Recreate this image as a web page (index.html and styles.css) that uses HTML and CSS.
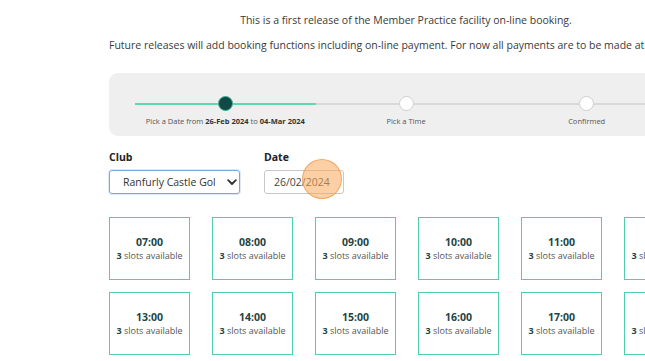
FILE: index.html
```html
<!DOCTYPE html>
<html lang="en">
<head>
  <meta charset="UTF-8" />
  <meta name="viewport" content="width=device-width, initial-scale=1" />
  <title>Member Practice Booking</title>
  <link rel="stylesheet" href="styles.css">
</head>
<body>
  <div class="page">
    <div class="intro">
      <p>This is a first release of the Member Practice facility on-line booking.</p>
      <p>Future releases will add booking functions including on-line payment. For now all payments are to be made at the Pro Shop.</p>
    </div>

    <div class="stepper">
      <div class="step done">
        <div class="track"><span class="bar"></span><span class="dot"></span><span class="bar"></span></div>
        <div class="step-label">Pick a Date from <b>26-Feb 2024</b> to <b>04-Mar 2024</b></div>
      </div>
      <div class="step">
        <div class="track"><span class="bar"></span><span class="dot"></span><span class="bar"></span></div>
        <div class="step-label">Pick a Time</div>
      </div>
      <div class="step">
        <div class="track"><span class="bar"></span><span class="dot"></span><span class="bar"></span></div>
        <div class="step-label">Confirmed</div>
      </div>
    </div>

    <div class="filters">
      <div class="field">
        <label>Club</label>
        <div class="select">
          <span class="select-text">Ranfurly Castle Golf Club</span>
          <svg class="chevron" width="10" height="7" viewBox="0 0 10 7"><path d="M1.2 1.2 L5 5 L8.8 1.2" fill="none" stroke="#333" stroke-width="1.9" stroke-linecap="round" stroke-linejoin="round"/></svg>
        </div>
      </div>
      <div class="field">
        <label>Date</label>
        <div class="date-input">
          26/02/2024
          <span class="click-mark"></span>
        </div>
      </div>
    </div>

    <div class="slots">
      <div class="slot"><div class="time">07:00</div><div class="avail"><b>3</b> slots available</div></div>
      <div class="slot"><div class="time">08:00</div><div class="avail"><b>3</b> slots available</div></div>
      <div class="slot"><div class="time">09:00</div><div class="avail"><b>3</b> slots available</div></div>
      <div class="slot"><div class="time">10:00</div><div class="avail"><b>3</b> slots available</div></div>
      <div class="slot"><div class="time">11:00</div><div class="avail"><b>3</b> slots available</div></div>
      <div class="slot"><div class="time">12:00</div><div class="avail"><b>3</b> slots available</div></div>
      <div class="slot"><div class="time">13:00</div><div class="avail"><b>3</b> slots available</div></div>
      <div class="slot"><div class="time">14:00</div><div class="avail"><b>3</b> slots available</div></div>
      <div class="slot"><div class="time">15:00</div><div class="avail"><b>3</b> slots available</div></div>
      <div class="slot"><div class="time">16:00</div><div class="avail"><b>3</b> slots available</div></div>
      <div class="slot"><div class="time">17:00</div><div class="avail"><b>3</b> slots available</div></div>
      <div class="slot"><div class="time">18:00</div><div class="avail"><b>3</b> slots available</div></div>
    </div>
  </div>
</body>
</html>
```

FILE: styles.css
```css
body {
  margin: 0;
  font-family: 'Open Sans', sans-serif;
  color: #333;
  background: #fff;
  overflow: hidden;
}

.page {
  width: 594px;
  margin-left: 109px;
  padding-top: 13px;
}

.intro {
  text-align: center;
  font-size: 10.5px;
  color: #3a3a3a;
  white-space: nowrap;
}

.intro p {
  margin: 0 0 11px;
  line-height: 14px;
}

.stepper {
  display: flex;
  margin-top: 21px;
  height: 63px;
  box-sizing: border-box;
  padding: 23px 26px 0;
  background: #efefef;
  border-radius: 9px;
}

.step {
  flex: 1;
  text-align: center;
}

.track {
  height: 15px;
  display: flex;
  align-items: center;
}

.bar {
  flex: 1;
  height: 0;
  border-top: 2px solid #d9d9d9;
}

.step.done .bar {
  border-top-color: #5ed8aa;
}

.dot {
  flex: none;
  width: 13px;
  height: 13px;
  border-radius: 50%;
  background: #fff;
  border: 1px solid #cfcfcf;
}

.step.done .dot {
  background: #0f4a46;
  border-color: #3fae8e;
}

.step-label {
  margin-top: 5px;
  font-size: 7.5px;
  line-height: 10px;
  color: #555;
  white-space: nowrap;
}

.step-label b {
  color: #333;
}

.filters {
  display: flex;
  gap: 24px;
  margin-top: 14px;
}

.field label {
  display: block;
  font-size: 10.5px;
  font-weight: 700;
  line-height: 14px;
  color: #222;
  margin-bottom: 6px;
}

.select {
  width: 131px;
  height: 24px;
  box-sizing: border-box;
  border: 1px solid #7ea6d6;
  border-radius: 3px;
  box-shadow: 0 0 0 1px rgba(126, 166, 214, 0.25);
  display: flex;
  align-items: center;
  padding: 0 2px 0 13px;
  font-size: 10.5px;
  color: #333;
}

.select-text {
  flex: 1;
  overflow: hidden;
  white-space: nowrap;
  margin-right: 12px;
}

.chevron {
  flex: none;
}

.date-input {
  position: relative;
  width: 80px;
  height: 24px;
  box-sizing: border-box;
  border: 1px solid #c8c8c8;
  border-radius: 3px;
  padding-left: 9px;
  font-size: 10.5px;
  line-height: 22px;
  color: #444;
}

.click-mark {
  position: absolute;
  left: 37px;
  top: -12px;
  width: 38px;
  height: 38px;
  border-radius: 50%;
  background: rgba(250, 170, 90, 0.55);
  border: 1px solid rgba(240, 150, 70, 0.7);
}

.slots {
  display: grid;
  grid-template-columns: repeat(6, 81px);
  column-gap: 22px;
  row-gap: 12px;
  margin-top: 23px;
}

.slot {
  height: 63px;
  box-sizing: border-box;
  border: 1.5px solid #52ccb0;
  display: flex;
  flex-direction: column;
  justify-content: center;
  align-items: center;
  padding-top: 1px;
}

.time {
  font-size: 10.5px;
  font-weight: 700;
  line-height: 13px;
  color: #1d4644;
}

.avail {
  font-size: 9px;
  line-height: 13px;
  color: #555;
  white-space: nowrap;
}

.avail b {
  color: #1d4644;
}
```
